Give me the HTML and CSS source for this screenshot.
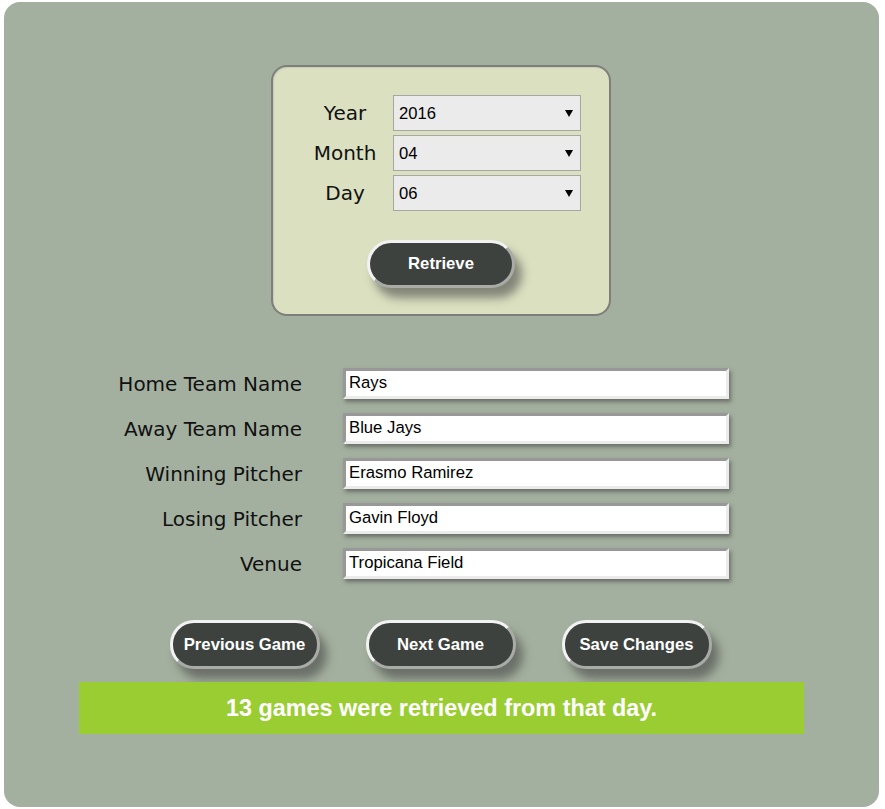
FILE: index.html
```html
<!DOCTYPE html>
<html>
<head>
<meta charset="utf-8">
<link rel="stylesheet" href="styles.css">
</head>
<body>
<div class="page">
  <div class="panel">
    <div class="date-grid">
      <label class="date-label">Year</label>
      <div class="select-wrap"><select class="date-select"><option>2016</option></select></div>
      <label class="date-label">Month</label>
      <div class="select-wrap"><select class="date-select"><option>04</option></select></div>
      <label class="date-label">Day</label>
      <div class="select-wrap"><select class="date-select"><option>06</option></select></div>
    </div>
    <div class="retrieve-row">
      <button class="pill">Retrieve</button>
    </div>
  </div>

  <div class="fields">
    <label class="field-label">Home Team Name</label>
    <input class="field-input" type="text" value="Rays">
    <label class="field-label">Away Team Name</label>
    <input class="field-input" type="text" value="Blue Jays">
    <label class="field-label">Winning Pitcher</label>
    <input class="field-input" type="text" value="Erasmo Ramirez">
    <label class="field-label">Losing Pitcher</label>
    <input class="field-input" type="text" value="Gavin Floyd">
    <label class="field-label">Venue</label>
    <input class="field-input" type="text" value="Tropicana Field">
  </div>

  <div class="actions">
    <button class="pill wide">Previous Game</button>
    <button class="pill wide">Next Game</button>
    <button class="pill wide">Save Changes</button>
  </div>

  <div class="status">13 games were retrieved from that day.</div>
</div>
</body>
</html>
```
FILE: styles.css
```css
html, body {
  margin: 0;
  padding: 0;
  background: #ffffff;
}

.page {
  box-sizing: border-box;
  width: 875px;
  height: 805px;
  margin: 2px 0 0 4px;
  background: #a4b09f;
  border-radius: 16px;
  padding-top: 63px;
  display: flex;
  flex-direction: column;
  align-items: center;
}

.panel {
  box-sizing: border-box;
  width: 340px;
  height: 251px;
  margin-left: -1px;
  background: #dbe0c1;
  border: 2px solid #7d7f7a;
  border-radius: 16px;
  padding: 28px 0 0 32px;
  box-shadow: inset 1px 1px 1px #c9ccb6;
}

.date-grid {
  display: grid;
  grid-template-columns: 80px 188px;
  column-gap: 8px;
  row-gap: 4px;
  grid-auto-rows: 36px;
  align-items: center;
}

.date-label {
  font-family: "DejaVu Sans", Verdana, sans-serif;
  font-size: 20px;
  color: #111;
  text-align: center;
}

.select-wrap {
  position: relative;
  height: 36px;
}

.select-wrap::after {
  content: "";
  position: absolute;
  right: 8px;
  top: 15px;
  width: 0;
  height: 0;
  border-left: 4px solid transparent;
  border-right: 4px solid transparent;
  border-top: 7px solid #000;
  pointer-events: none;
}

.date-select {
  -webkit-appearance: none;
  appearance: none;
  box-sizing: border-box;
  width: 188px;
  height: 36px;
  background: #ebebeb;
  border: 1px solid #a6a6a2;
  border-radius: 0;
  padding: 0 0 0 5px;
  font-family: "Liberation Sans", Arial, sans-serif;
  font-size: 16.6px;
  color: #000;
  margin: 0;
}

.retrieve-row {
  display: flex;
  justify-content: center;
  margin: 29px 0 0 -32px;
}

.pill {
  box-sizing: border-box;
  width: 148px;
  height: 48px;
  background: #3d423e;
  color: #ffffff;
  font-family: "Liberation Sans", Arial, sans-serif;
  font-weight: bold;
  font-size: 16.7px;
  border-style: solid;
  border-width: 3px;
  border-color: #f2f2f2 #a9aba7 #a9aba7 #f2f2f2;
  border-radius: 24px;
  box-shadow: 7px 10px 10px rgba(60, 60, 60, 0.55);
  padding: 0;
  margin: 0;
}

.pill.wide {
  width: 150px;
  height: 49px;
}

.fields {
  display: grid;
  grid-template-columns: 200px 386px;
  column-gap: 41px;
  row-gap: 14px;
  grid-auto-rows: 31px;
  align-items: center;
  margin-top: 52px;
  margin-left: -52px;
}

.field-label {
  font-family: "DejaVu Sans", Verdana, sans-serif;
  font-size: 20px;
  color: #111;
  text-align: right;
}

.field-input {
  box-sizing: border-box;
  width: 386px;
  height: 31px;
  margin: 0;
  background: #ffffff;
  border-style: solid;
  border-width: 3px;
  border-color: #989898 #ebebeb #ebebeb #989898;
  padding: 0 0 2px 3px;
  font-family: "Liberation Sans", Arial, sans-serif;
  font-size: 16.7px;
  color: #000;
  box-shadow: 2px 3px 4px rgba(70, 70, 70, 0.6);
}

.actions {
  display: flex;
  justify-content: center;
  gap: 46px;
  margin-top: 41px;
  margin-left: -2px;
}

.status {
  box-sizing: border-box;
  width: 725px;
  height: 52px;
  margin-top: 13px;
  background: #9acd32;
  color: #ffffff;
  font-family: "Liberation Sans", Arial, sans-serif;
  font-weight: bold;
  font-size: 23.4px;
  display: flex;
  align-items: center;
  justify-content: center;
}
```
